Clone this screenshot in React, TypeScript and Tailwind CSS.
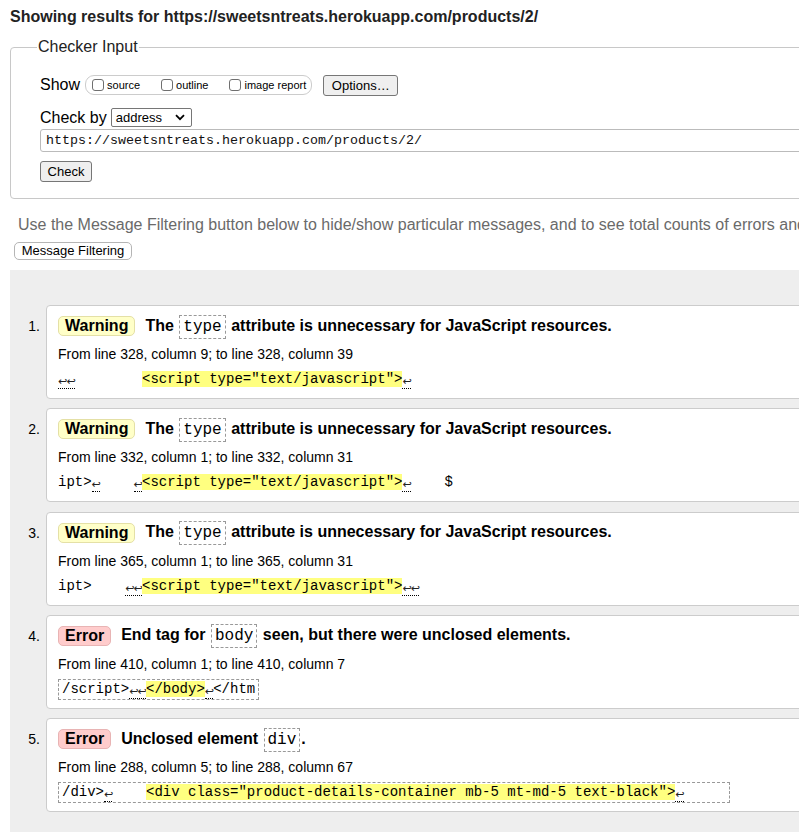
import React from 'react';

const sans = 'font-["Liberation_Sans",Arial,sans-serif]';
const mono = 'font-["Liberation_Mono","Courier_New",monospace]';

type Seg = { t: string; k?: 'hl' | 'ret' };

function Ret({ n = 1 }: { n?: number }) {
  return (
    <span className="inline-block border-b border-dotted border-black leading-[13px] align-[-2px]">
      {Array.from({ length: n }).map((_, i) => (
        <span key={i} className='inline-block w-[8.4px] text-center text-[11px] font-["DejaVu_Sans",sans-serif] text-[#222]'>↩</span>
      ))}
    </span>
  );
}

function Extract({ segs, boxed }: { segs: Seg[]; boxed?: boolean }) {
  const body = segs.map((s, i) => {
    if (s.k === 'ret') return <Ret key={i} n={s.t.length} />;
    if (s.k === 'hl') return <span key={i} className="bg-[#ffff80]">{s.t}</span>;
    return <span key={i}>{s.t}</span>;
  });
  return (
    <div className={`${mono} text-[14px] leading-[20px] h-[20px] whitespace-pre text-black`}>
      {boxed ? (
        <span className="inline-block border border-dashed border-[#999] px-[3px] leading-[18px]">{body}</span>
      ) : (
        body
      )}
    </div>
  );
}

function Code({ children }: { children: React.ReactNode }) {
  return (
    <code className={`${mono} inline-block font-normal text-[16px] leading-[20px] border border-dashed border-[#999] px-[3px] py-[1px] mx-[1px]`}>
      {children}
    </code>
  );
}

type Msg = {
  kind: 'Warning' | 'Error';
  title: React.ReactNode;
  loc: string;
  segs: Seg[];
  boxed?: boolean;
};

const scriptTag = '<script type="text/javascript">';

const typeTitle = (
  <>
    The <Code>type</Code> attribute is unnecessary for JavaScript resources.
  </>
);

const messages: Msg[] = [
  {
    kind: 'Warning',
    title: typeTitle,
    loc: 'From line 328, column 9; to line 328, column 39',
    segs: [{ t: '↩↩', k: 'ret' }, { t: '        ' }, { t: scriptTag, k: 'hl' }, { t: '↩', k: 'ret' }],
  },
  {
    kind: 'Warning',
    title: typeTitle,
    loc: 'From line 332, column 1; to line 332, column 31',
    segs: [
      { t: 'ipt>' },
      { t: '↩', k: 'ret' },
      { t: '    ' },
      { t: '↩', k: 'ret' },
      { t: scriptTag, k: 'hl' },
      { t: '↩', k: 'ret' },
      { t: '    $' },
    ],
  },
  {
    kind: 'Warning',
    title: typeTitle,
    loc: 'From line 365, column 1; to line 365, column 31',
    segs: [{ t: 'ipt>    ' }, { t: '↩↩', k: 'ret' }, { t: scriptTag, k: 'hl' }, { t: '↩↩', k: 'ret' }],
  },
  {
    kind: 'Error',
    title: (
      <>
        End tag for <Code>body</Code> seen, but there were unclosed elements.
      </>
    ),
    loc: 'From line 410, column 1; to line 410, column 7',
    boxed: true,
    segs: [{ t: '/script>' }, { t: '↩↩', k: 'ret' }, { t: '</body>', k: 'hl' }, { t: '↩', k: 'ret' }, { t: '</htm' }],
  },
  {
    kind: 'Error',
    title: (
      <>
        Unclosed element <Code>div</Code>.
      </>
    ),
    loc: 'From line 288, column 5; to line 288, column 67',
    boxed: true,
    segs: [
      { t: '/div>' },
      { t: '↩', k: 'ret' },
      { t: '    ' },
      { t: '<div class="product-details-container mb-5 mt-md-5 text-black">', k: 'hl' },
      { t: '↩', k: 'ret' },
      { t: '     ' },
    ],
  },
];

function Checkbox({ label }: { label: string }) {
  return (
    <label className="flex items-center gap-[3px]">
      <span className="w-[12px] h-[12px] border border-[#6f6f6f] rounded-[3px] bg-white" />
      <span className="text-[11px]">{label}</span>
    </label>
  );
}

export default function App() {
  return (
    <div className={`${sans} w-[799px] h-[832px] overflow-hidden bg-white text-black`}>
      <div className="w-[1100px] px-[10px] pt-[8px]">
        <h2 className="text-[16px] leading-[18px] font-bold text-[#222]">
          Showing results for https://sweetsntreats.herokuapp.com/products/2/
        </h2>

        <fieldset className="mt-[11px] border border-[#c8c8c8] rounded-[4px] pl-[29px] pt-[17px] pb-[16px]">
          <legend className="-ml-[3px] px-[1px] text-[16px] leading-[20px] text-[#222]">Checker Input</legend>

          <div className="flex items-center h-[22px]">
            <span className="text-[16px]">Show</span>
            <div className="ml-[5px] flex items-center gap-[21px] border border-[#ccc] rounded-[9px] h-[20px] pl-[6px] pr-[5px]">
              <Checkbox label="source" />
              <Checkbox label="outline" />
              <Checkbox label="image report" />
            </div>
            <button className="ml-[11px] h-[21px] w-[75px] bg-[#efefef] border border-[#767676] rounded-[3px] text-[13px]">
              Options…
            </button>
          </div>

          <div className="flex items-center h-[21px] mt-[11px]">
            <span className="text-[16px]">Check by</span>
            <div className="ml-[4px] w-[81px] h-[19px] border border-[#767676] rounded-[2px] flex items-center justify-between pl-[4px] pr-[6px] text-[13px]">
              <span>address</span>
              <svg width="10" height="7" viewBox="0 0 10 7" fill="none" stroke="black" strokeWidth="1.8">
                <path d="M1 1.2l4 4 4-4" />
              </svg>
            </div>
          </div>

          <div className={`mt-[1px] h-[23px] border border-[#bbb] rounded-[3px] flex items-center pl-[5px] ${mono} text-[13.33px] text-[#111]`}>
            https://sweetsntreats.herokuapp.com/products/2/
          </div>

          <button className="block mt-[9px] h-[21px] w-[52px] bg-[#efefef] border border-[#767676] rounded-[3px] text-[13px]">
            Check
          </button>
        </fieldset>

        <p className="mt-[17px] ml-[8px] text-[16px] leading-[18px] text-[#6a6a6a] whitespace-nowrap">
          Use the Message Filtering button below to hide/show particular messages, and to see total counts of errors and warnings.
        </p>

        <button className="block mt-[8px] ml-[4px] h-[18px] w-[118px] bg-white border border-[#b5b5b5] rounded-[5px] text-[13px] leading-[16px]">
          Message Filtering
        </button>

        <div className="mt-[10px] bg-[#eeeeee] pt-[35px] pb-[40px] flex flex-col gap-[9.3px]">
          {messages.map((m, i) => (
            <div key={i} className="flex">
              <div className="w-[36px] shrink-0 text-right pr-[6px] pt-[9px] text-[14px] leading-[24px]">{i + 1}.</div>
              <div className="flex-1 h-[94px] bg-white border border-[#cccccc] rounded-[4px] pl-[11px] pt-[8px]">
                <div className="flex items-center h-[24px] text-[16px] font-bold whitespace-nowrap">
                  <span
                    className={`px-[6px] h-[20px] leading-[18px] rounded-[5px] border ${
                      m.kind === 'Warning' ? 'bg-[#ffffc8] border-[#e4e0a6]' : 'bg-[#ffcccc] border-[#e8b4b4]'
                    }`}
                  >
                    {m.kind}
                  </span>
                  <span className="ml-[10px]">{m.title}</span>
                </div>
                <div className="mt-[7px] h-[18px] text-[14px] leading-[18px]">{m.loc}</div>
                <div className="mt-[6px]">
                  <Extract segs={m.segs} boxed={m.boxed} />
                </div>
              </div>
            </div>
          ))}
        </div>
      </div>
    </div>
  );
}
